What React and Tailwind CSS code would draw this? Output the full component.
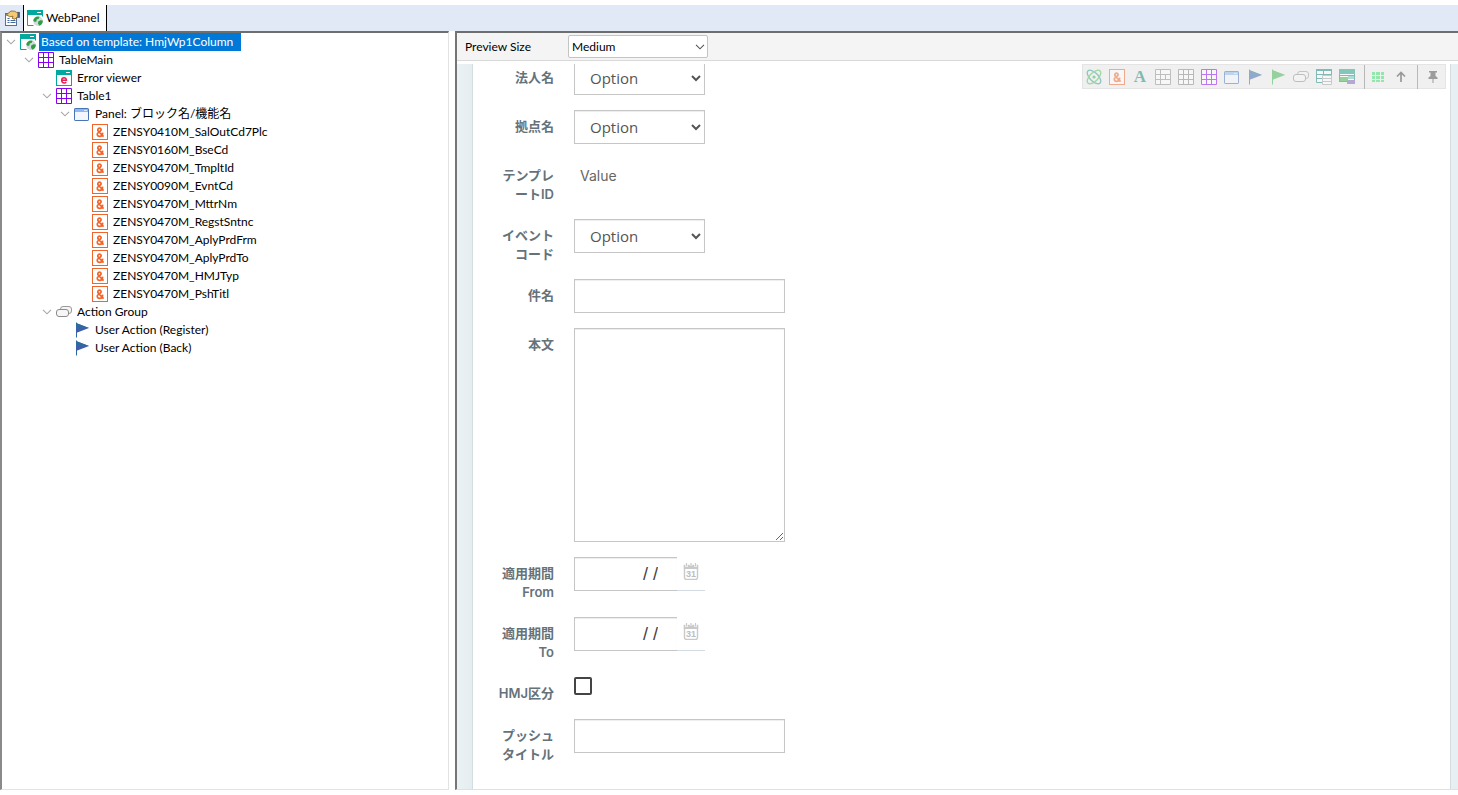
import React from "react";

function Svg({ children, w = 16, h = 16 }) {
  return (
    <svg width={w} height={h} viewBox={`0 0 ${w} ${h}`} aria-hidden="true" className="block shrink-0">
      {children}
    </svg>
  );
}

function WebPanelIcon() {
  return (
    <Svg>
      <path d="M0.5 0.5h15v6M0.5 0.5v15h6" fill="#fff" stroke="#00a99d" />
      <path d="M1 1h14v14H1z" fill="#fff" />
      <rect x="0" y="0" width="16" height="5" fill="#00a99d" />
      <rect x="10" y="2" width="4" height="1" fill="#fff" />
      <circle cx="11" cy="11.2" r="4.8" fill="#d3dadd" />
      <path d="M6.2 10.6C6.6 8 8.6 6.4 11 6.4l1.6.4-.8 2-2 .8-.4 1.8-1.6.6z" fill="#2f9e41" />
      <path d="M11.2 11.4l2.2-1.2 2.4.4c.2 2.4-1.2 4.4-3.4 5.2L11 13.8z" fill="#2f9e41" />
    </Svg>
  );
}

function PropertiesIcon() {
  return (
    <Svg>
      <rect x="1.5" y="3.5" width="11" height="12" fill="#fff" stroke="#5d6f8f" />
      <rect x="2" y="4" width="10" height="2" fill="#8fa5c8" />
      <path d="M3.5 8.5h2M3.5 10.5h2M3.5 12.5h2M6.5 10.5h5M6.5 12.5h5" stroke="#44679f" />
      <path d="M2.6 4.6L7 1l3.6.2 2 1.2h3v5h-3L11 9.2 8.2 8.4l.8-2.2-3.4.6z" fill="#f5c873" stroke="#7d5a1c" strokeWidth="0.8" />
      <path d="M13.4 2h2.2v5.6h-2.2z" fill="#4c5d77" />
    </Svg>
  );
}

function GridIcon({ color = "#8b00f0" }) {
  return (
    <Svg>
      <path d="M0.5 0.5h15v15h-15zM5.5 0.5v15M10.5 0.5v15M0.5 5.5h15M0.5 10.5h15" fill="#fff" stroke={color} />
    </Svg>
  );
}

function ErrorIcon() {
  return (
    <Svg>
      <rect x="0.5" y="0.5" width="15" height="15" fill="#fff" stroke="#00a99d" />
      <rect x="0" y="0" width="16" height="5" fill="#00a99d" />
      <rect x="10" y="2" width="4" height="1" fill="#fff" />
      <path d="M5.9 10.3h4.5c0-1.6-.9-2.6-2.3-2.6s-2.4 1.1-2.4 2.6 1 2.6 2.6 2.6c.8 0 1.5-.3 2-.7" fill="none" stroke="#ea1f55" strokeWidth="1.5" />
    </Svg>
  );
}

function WindowIcon() {
  return (
    <Svg>
      <rect x="0.5" y="2.5" width="14" height="12" rx="0.6" fill="#f3f7fd" stroke="#4873b5" />
      <rect x="1" y="3" width="13" height="3" fill="#8db9ec" />
      <rect x="10" y="4" width="3" height="1" fill="#d6e7fa" />
    </Svg>
  );
}

function AmpIcon() {
  return (
    <Svg>
      <rect x="0.5" y="0.5" width="15" height="15" fill="#fff" stroke="#f1652a" />
      <path d="M11.6 12.6L6.3 7.2C5.3 6 5.8 4.2 7.5 4.2s2.2 1.9.9 2.8L6.2 8.6c-1.7 1.2-1 3.7 1.3 3.7 2.1 0 3.1-1.7 3.2-3.7" fill="none" stroke="#f1652a" strokeWidth="1.7" />
    </Svg>
  );
}

function GroupIcon() {
  return (
    <Svg>
      <rect x="4.5" y="2.5" width="11" height="7" rx="2.5" fill="#f4f4f4" stroke="#9a9a9a" />
      <rect x="0.5" y="5.5" width="12" height="7" rx="2.5" fill="#f6f6f6" stroke="#8c8c8c" />
    </Svg>
  );
}

function FlagIcon({ top = "#2d6a9f", fill = "#3c5fa8" }) {
  return (
    <Svg>
      <path d="M2.5 0.5v15" stroke={top} />
      <path d="M2 1L15 6 2 11z" fill={fill} />
      <path d="M2 1v5h13z" fill={top} />
    </Svg>
  );
}

function AtomIcon() {
  return (
    <Svg>
      <g fill="none" strokeWidth="1.3">
        <ellipse cx="8" cy="8" rx="8.6" ry="4.2" transform="rotate(45 8 8)" stroke="#2b9d8f" />
        <ellipse cx="8" cy="8" rx="8.6" ry="4.2" transform="rotate(-45 8 8)" stroke="#4cc25a" />
      </g>
      <circle cx="8" cy="8" r="1.6" fill="#35b558" />
    </Svg>
  );
}

function LetterIcon() {
  return (
    <span aria-hidden="true" className="flex size-4 items-center justify-center font-['Liberation_Serif',serif] text-[17px] leading-4 font-bold text-[#138573]">
      A
    </span>
  );
}

function MergedGridIcon() {
  return (
    <Svg>
      <path d="M0.5 0.5h15v15h-15zM0.5 5.5h15M0.5 10.5h15M5.5 0.5v15M10.5 5.5v5" fill="#fff" stroke="#8b8f90" />
      <path d="M1 5h4v1H1zM5 10h6v1H5z" fill="#8b8f90" />
    </Svg>
  );
}

function DataGridIcon() {
  return (
    <Svg>
      <path d="M0.5 1.5h15v12h-15zM0.5 5.5h15M0.5 9.5h15M7.5 1.5v12" fill="#fff" stroke="#16877e" />
      <rect x="0" y="0" width="16" height="2" fill="#16877e" />
      <path d="M6.5 6.5h9v9h-9zM6.5 9.5h9M6.5 12.5h9" fill="#fff" stroke="#a2a4a8" />
    </Svg>
  );
}

function FreeGridIcon() {
  return (
    <Svg>
      <rect x="0.5" y="0.5" width="15" height="12" fill="#fff" stroke="#16877e" />
      <rect x="0" y="0" width="16" height="5" fill="#16a085" />
      <path d="M0 6.5h16" stroke="#16877e" />
      <rect x="1" y="8" width="8" height="4" fill="#3bb54a" />
      <rect x="8" y="11" width="8" height="4" fill="#7a62b8" />
      <rect x="9" y="7" width="6" height="3" fill="#6ec7b8" />
    </Svg>
  );
}

function DotsIcon() {
  return (
    <Svg>
      <path d="M2 3h3v3H2zM6 3h4v3H6zM11 3h3v3h-3zM2 7h3v3H2zM6 7h4v3H6zM11 7h3v3h-3zM2 11h3v2H2zM6 11h4v2H6zM11 11h3v2h-3z" fill="#39e06c" />
    </Svg>
  );
}

function UpIcon() {
  return (
    <Svg>
      <path d="M8 13V4M4 7.5L8 3.5l4 4" fill="none" stroke="#444" strokeWidth="1.7" />
    </Svg>
  );
}

function PinIcon() {
  return (
    <Svg>
      <path d="M4 2h8v1.5h-1.5V7L12.5 8.5V10h-4v4h-1v-4h-4V8.5L5.5 7V3.5H4z" fill="#4a4a4a" />
    </Svg>
  );
}

function ThinChevron({ color }) {
  return (
    <svg width="10" height="6" viewBox="0 0 10 6" aria-hidden="true" className="block shrink-0">
      <path d="M1 0.8l4 4 4-4" fill="none" stroke={color} strokeWidth="1.1" />
    </svg>
  );
}

const INDENT = ["pl-1", "pl-[22px]", "pl-10", "pl-[58px]", "pl-19"];

const TREE = [
  { level: 0, label: "Based on template: HmjWp1Column", icon: <WebPanelIcon />, open: true, selected: true },
  { level: 1, label: "TableMain", icon: <GridIcon />, open: true },
  { level: 2, label: "Error viewer", icon: <ErrorIcon /> },
  { level: 2, label: "Table1", icon: <GridIcon />, open: true },
  { level: 3, label: "Panel: ブロック名/機能名", icon: <WindowIcon />, open: true },
  ...[
    "ZENSY0410M_SalOutCd7Plc",
    "ZENSY0160M_BseCd",
    "ZENSY0470M_TmpltId",
    "ZENSY0090M_EvntCd",
    "ZENSY0470M_MttrNm",
    "ZENSY0470M_RegstSntnc",
    "ZENSY0470M_AplyPrdFrm",
    "ZENSY0470M_AplyPrdTo",
    "ZENSY0470M_HMJTyp",
    "ZENSY0470M_PshTitl",
  ].map((label) => ({ level: 4, label, icon: <AmpIcon /> })),
  { level: 2, label: "Action Group", icon: <GroupIcon />, open: true },
  { level: 3, label: "User Action (Register)", icon: <FlagIcon /> },
  { level: 3, label: "User Action (Back)", icon: <FlagIcon /> },
];

function TreeRow({ item }) {
  return (
    <li role="treeitem" aria-level={item.level + 1} aria-selected={!!item.selected} className={`flex h-[18px] items-center ${INDENT[item.level]}`}>
      {item.open ? (
        <button type="button" aria-label={`Collapse ${item.label}`} className="flex w-3.5 justify-start">
          <ThinChevron color="#a6a6a6" />
        </button>
      ) : (
        <span className="w-3.5" />
      )}
      {item.icon}
      <span className={`ml-[3px] h-[18px] pl-0.5 leading-[18px] whitespace-nowrap ${item.selected ? "bg-[#0078d7] pr-2 text-white" : ""}`}>
        {item.label}
      </span>
    </li>
  );
}

const TOOLS = [
  ["Component", <AtomIcon />],
  ["Attribute / Variable", <AmpIcon />],
  ["Text block", <LetterIcon />],
  ["Responsive table", <MergedGridIcon />],
  ["Table", <GridIcon color="#7d8183" />],
  ["Main table", <GridIcon />],
  ["Panel", <WindowIcon />],
  ["User action", <FlagIcon />],
  ["Standard action", <FlagIcon top="#3cb44b" fill="#3cb44b" />],
  ["Action group", <GroupIcon />],
  ["Grid", <DataGridIcon />],
  ["Free style grid", <FreeGridIcon />],
];

function ToolButton({ label, children }) {
  return (
    <button type="button" aria-label={label} className="flex h-6 w-[23px] items-center pl-[3px]">
      <span className="opacity-50">{children}</span>
    </button>
  );
}

function Toolbar() {
  return (
    <div role="toolbar" aria-label="Controls" className="absolute top-0 right-3 flex h-[25px] items-center border border-[#e4e4e4] bg-[#f0f0f0]">
      {TOOLS.map(([label, icon]) => (
        <ToolButton key={label} label={label}>{icon}</ToolButton>
      ))}
      <span className="mr-0.5 ml-[5px] h-6 w-px bg-[#b8b8b8]" />
      <ToolButton label="Show grid"><DotsIcon /></ToolButton>
      <ToolButton label="Select parent"><UpIcon /></ToolButton>
      <span className="mx-1 h-6 w-px bg-[#b8b8b8]" />
      <ToolButton label="Pin"><PinIcon /></ToolButton>
    </div>
  );
}

function Row({ id, lines, children }) {
  return (
    <div className="flex min-h-[27px] items-start gap-5">
      <label htmlFor={id} className="w-[81px] shrink-0 pt-[7px] text-right text-[13px] leading-[19px] font-semibold text-[#66727a]">
        {lines.map((line) => (
          <span key={line} className="block whitespace-nowrap">{line}</span>
        ))}
      </label>
      {children}
    </div>
  );
}

const FIELD = "border border-[#c6c6c6] bg-white shadow-[inset_0_1px_1px_rgba(0,0,0,0.075)]";

function OptionSelect({ id }) {
  return (
    <select id={id} className={`h-[34px] w-[131px] px-[11px] font-['Open_Sans',sans-serif] text-[15px] text-[#555] ${FIELD}`}>
      <option>Option</option>
    </select>
  );
}

function CalendarIcon() {
  return (
    <svg width="16" height="17" viewBox="0 0 16 17" aria-hidden="true" className="block">
      <path d="M1.5 2.5h13v12a2 2 0 0 1-2 2h-9a2 2 0 0 1-2-2z" fill="#fff" stroke="#c9c9c9" strokeWidth="1.4" />
      <path d="M0.8 2h14.4v4H0.8z" fill="#c9c9c9" />
      <path d="M3.5 0v4M12.5 0v4M8 0v3" stroke="#fff" strokeWidth="2.4" />
      <path d="M3.5 0v3.4M12.5 0v3.4M8 0v3" stroke="#c9c9c9" strokeWidth="1.2" />
      <text x="8" y="13.8" textAnchor="middle" fontSize="9" fontWeight="700" fontFamily="Liberation Sans, sans-serif" fill="#bdbdbd">31</text>
    </svg>
  );
}

function DateField({ id }) {
  return (
    <div className="flex h-[34px] w-[131px]">
      <input id={id} type="text" defaultValue="/ /" className={`w-[103px] border-r-0 pr-[19px] text-right font-['Liberation_Sans',sans-serif] text-[18px] text-[#444] ${FIELD}`} />
      <button type="button" aria-label="Open calendar" className="flex flex-1 justify-center border-b border-[#d3dce2] pt-1.5">
        <CalendarIcon />
      </button>
    </div>
  );
}

export default function App() {
  return (
    <div className="flex min-h-screen flex-col bg-white pt-[5px] pb-[5px] font-[Lato,'Noto_Sans_CJK_JP',sans-serif] text-[12px] text-black">
      <header className="flex h-[26px] shrink-0 bg-[#e2e9f6]">
        <button type="button" aria-label="Properties" className="flex w-[23px] items-center pl-1">
          <PropertiesIcon />
        </button>
        <button type="button" className="flex items-center gap-[3px] border-x border-black bg-white pr-[7px] pl-[3px]">
          <WebPanelIcon />
          <span>WebPanel</span>
        </button>
      </header>

      <main className="flex flex-1 gap-1.5">
        <section aria-label="Structure" className="w-[449px] shrink-0 border-2 border-t-[#6e6e6e] border-r-[#e3e3e3] border-b-[#e3e3e3] border-l-[#8a8a8a] border-r border-b">
          <ul role="tree">
            {TREE.map((item) => (
              <TreeRow key={item.label} item={item} />
            ))}
          </ul>
        </section>

        <section aria-label="Preview" className="flex min-w-0 flex-1 flex-col border-t-2 border-b border-l-2 border-t-[#6e6e6e] border-b-[#e0e0e0] border-l-[#757575]">
          <div className="flex h-7 items-center border-b border-[#d9d9d9] bg-[#f4f4f4] pl-2">
            <label htmlFor="preview-size" className="w-[103px]">Preview Size</label>
            <div className="relative">
              <select id="preview-size" className="block h-[23px] w-[140px] appearance-none rounded-xs border border-[#c4c4c4] bg-white pl-[3px] text-[12px]">
                <option>Medium</option>
              </select>
              <span className="pointer-events-none absolute top-[9px] right-[3px]">
                <ThinChevron color="#555" />
              </span>
            </div>
          </div>

          <div className="relative mt-[3px] flex flex-1 overflow-hidden">
            <div className="w-[15px] shrink-0 bg-linear-to-r from-[#eaf2f6] to-[#e5edf1]" />
            <form className="-mt-[3px] flex flex-1 flex-col gap-[15px] border-x border-[#d3dde2] bg-white pb-6 font-[Inter,'Noto_Sans_CJK_JP',sans-serif]">
              <Row id="corp" lines={["法人名"]}><OptionSelect id="corp" /></Row>
              <Row id="base" lines={["拠点名"]}><OptionSelect id="base" /></Row>
              <Row id="template" lines={["テンプレ", "ートID"]}>
                <output id="template" className="pt-[7px] pl-[6px] text-[14px] leading-[19px] text-[#666]">Value</output>
              </Row>
              <Row id="event" lines={["イベント", "コード"]}><OptionSelect id="event" /></Row>
              <Row id="subject" lines={["件名"]}>
                <input id="subject" type="text" className={`h-[34px] w-[211px] px-3 ${FIELD}`} />
              </Row>
              <Row id="body" lines={["本文"]}>
                <textarea id="body" className={`block h-[214px] w-[211px] px-3 py-1.5 ${FIELD}`} />
              </Row>
              <Row id="from" lines={["適用期間", "From"]}><DateField id="from" /></Row>
              <Row id="to" lines={["適用期間", "To"]}><DateField id="to" /></Row>
              <Row id="hmj" lines={["HMJ区分"]}>
                <input id="hmj" type="checkbox" className="size-[18px] appearance-none rounded-xs border-2 border-[#444] bg-white" />
              </Row>
              <Row id="push" lines={["プッシュ", "タイトル"]}>
                <input id="push" type="text" className={`h-[34px] w-[211px] px-3 ${FIELD}`} />
              </Row>
            </form>
            <div className="w-[7px] shrink-0 bg-[#e8eff3]" />
            <Toolbar />
          </div>
        </section>
      </main>
    </div>
  );
}
